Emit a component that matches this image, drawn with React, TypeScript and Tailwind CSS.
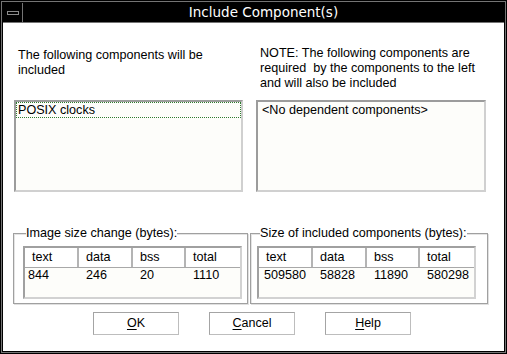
import React from "react";

const font = { fontFamily: '"Liberation Sans", Arial, sans-serif' };

type Row = { text: string; data: string; bss: string; total: string };

function SizeTable({ row, dataIndent }: { row: Row; dataIndent: string }) {
  const cols = ["w-[54px]", "w-[54px]", "w-[53px]", "flex-1"];
  const heads = ["text", "data", "bss", "total"];
  const vals = [row.text, row.data, row.bss, row.total];
  return (
    <div className="flex h-[53px] w-[219px] flex-col border-2 border-t-[#a0a0a0] border-l-[#a0a0a0] border-b-[#d2d2d2] border-r-[#d2d2d2] bg-[#fdfdfa]">
      <div className="flex h-[20px] border-b border-[#a8a8a8] bg-white">
        {heads.map((h, i) => (
          <div
            key={h}
            className={`${cols[i]} h-[19px] pl-[7px] leading-[19px] ${
              i < 3 ? "border-r-2 border-r-[#b4b4b4]" : ""
            }`}
          >
            {h}
          </div>
        ))}
      </div>
      <div className="flex h-[15px] leading-[15px]">
        {vals.map((v, i) => (
          <div key={i} className={`${cols[i]} ${i === 0 ? dataIndent : "pl-[7px]"}`}>
            {v}
          </div>
        ))}
      </div>
    </div>
  );
}

function Group({
  label,
  className,
  children,
}: {
  label: string;
  className: string;
  children: React.ReactNode;
}) {
  return (
    <fieldset
      className={`border border-[#a0a0a0] pb-[4px] shadow-[inset_1px_1px_0_#e4e4e4,1px_1px_0_#e0e0e0] ${className}`}
    >
      <legend className="ml-[3px] bg-white px-0 leading-[13px]">{label}</legend>
      <div className="pt-[6px]">{children}</div>
    </fieldset>
  );
}

function DlgButton({ mnemonic, rest }: { mnemonic: string; rest: string }) {
  return (
    <button className="h-[23px] w-[86px] border border-[#a4a4a4] border-b-[#bdbdbd] border-r-[#bdbdbd] bg-white text-[12.5px] text-black">
      <span className="underline underline-offset-2">{mnemonic}</span>
      {rest}
    </button>
  );
}

export default function App() {
  return (
    <div className="h-[354px] w-[507px] bg-black p-px" style={font}>
      <div className="h-full border border-[#747474]">
        <div className="flex h-full flex-col border border-black">
          {/* title bar */}
          <div className="flex h-[20px] shrink-0 border-b border-[#747474] bg-black">
            <div className="flex w-[20px] items-center justify-center border-r border-[#747474]">
              <div className="h-[4px] w-[12px] border border-[#8a8a8a]" />
            </div>
            <div
              className="flex-1 text-center leading-[19px] text-white"
              style={{ fontFamily: '"DejaVu Sans", "Liberation Sans", sans-serif', fontSize: "13.5px" }}
            >
              Include Component(s)
            </div>
          </div>

          {/* body */}
          <div className="flex flex-1 flex-col bg-white text-[12.6px] text-black">
            <div className="flex gap-[13px] pl-[11px] pt-[23px]">
              <div className="flex w-[229px] flex-col">
                <div className="h-[54px] pt-[2px] pl-[4px] leading-[15px]">
                  The following components will be
                  <br />
                  included
                </div>
                <div className="h-[92px] shrink-0 border-2 border-t-[#9c9c9c] border-l-[#9c9c9c] border-b-[#d0d0d0] border-r-[#d0d0d0] bg-[#fdfdfa]">
                  <div className="h-[16px] border border-dotted border-[#2f7a2f] pl-px leading-[14px]">
                    POSIX clocks
                  </div>
                </div>
              </div>
              <div className="flex w-[230px] flex-col">
                <div className="h-[54px] whitespace-pre pl-[4px] leading-[15px]">
                  {"NOTE: The following components are\nrequired  by the components to the left\nand will also be included"}
                </div>
                <div className="h-[92px] shrink-0 border-2 border-t-[#9c9c9c] border-l-[#9c9c9c] border-b-[#d0d0d0] border-r-[#d0d0d0] bg-[#fdfdfa] pl-[4px] pt-px leading-[15px]">
                  &lt;No dependent components&gt;
                </div>
              </div>
            </div>

            <div className="mt-[35px] flex gap-[2px] pl-[10px]">
              <Group label="Image size change (bytes):" className="w-[235px] pl-[9px]">
                <SizeTable
                  row={{ text: "844", data: "246", bss: "20", total: "1110" }}
                  dataIndent="pl-[3px]"
                />
              </Group>
              <Group label="Size of included components (bytes):" className="w-[238px] pl-[6px]">
                <SizeTable
                  row={{ text: "509580", data: "58828", bss: "11890", total: "580298" }}
                  dataIndent="pl-[5px]"
                />
              </Group>
            </div>

            <div className="mt-[8px] flex gap-[30px] pl-[90px]">
              <DlgButton mnemonic="O" rest="K" />
              <DlgButton mnemonic="C" rest="ancel" />
              <DlgButton mnemonic="H" rest="elp" />
            </div>
          </div>
        </div>
      </div>
    </div>
  );
}
